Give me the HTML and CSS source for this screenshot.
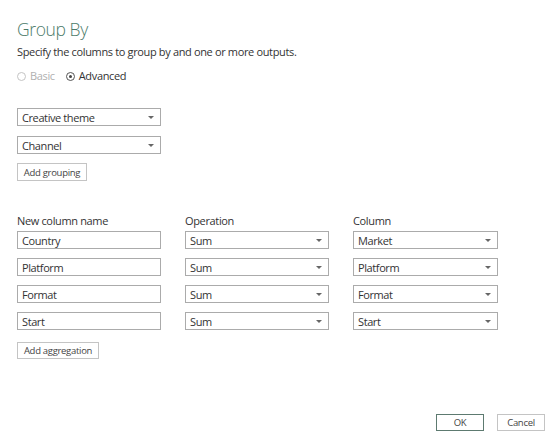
FILE: index.html
```html
<!DOCTYPE html>
<html>
<head>
<meta charset="utf-8">
<link rel="stylesheet" href="styles.css">
</head>
<body>
<div class="dialog">
  <h1 class="title">Group By</h1>
  <p class="subtitle">Specify the columns to group by and one or more outputs.</p>
  <div class="radios">
    <span class="radio disabled"><span class="dot"></span>Basic</span>
    <span class="radio checked"><span class="dot"></span>Advanced</span>
  </div>

  <div class="grouping">
    <div class="select"><span>Creative theme</span><span class="arrow"></span></div>
    <div class="select"><span>Channel</span><span class="arrow"></span></div>
    <button class="btn">Add grouping</button>
  </div>

  <div class="agg">
    <div class="label">New column name</div>
    <div class="label">Operation</div>
    <div class="label">Column</div>

    <div class="input">Country</div>
    <div class="select"><span>Sum</span><span class="arrow"></span></div>
    <div class="select"><span>Market</span><span class="arrow"></span></div>

    <div class="input">Platform</div>
    <div class="select"><span>Sum</span><span class="arrow"></span></div>
    <div class="select"><span>Platform</span><span class="arrow"></span></div>

    <div class="input">Format</div>
    <div class="select"><span>Sum</span><span class="arrow"></span></div>
    <div class="select"><span>Format</span><span class="arrow"></span></div>

    <div class="input">Start</div>
    <div class="select"><span>Sum</span><span class="arrow"></span></div>
    <div class="select"><span>Start</span><span class="arrow"></span></div>
  </div>
  <button class="btn agg-btn">Add aggregation</button>

  <div class="footer">
    <button class="btn ok">OK</button>
    <button class="btn">Cancel</button>
  </div>
</div>
</body>
</html>
```
FILE: styles.css
```css
html, body {
  margin: 0;
  padding: 0;
  background: #ffffff;
}
body {
  font-family: "Open Sans", "Noto Sans", sans-serif;
  color: #444444;
  width: 554px;
  height: 439px;
  overflow: hidden;
}
.dialog {
  padding: 0 9px 0 17px;
  display: flex;
  flex-direction: column;
  height: 439px;
  box-sizing: border-box;
}
.title {
  margin: 18px 0 0;
  font-size: 17.5px;
  line-height: 22px;
  font-weight: 300;
  letter-spacing: -0.4px;
  color: #4c7b6a;
}
.subtitle {
  margin: 4px 0 0;
  font-size: 11px;
  line-height: 16px;
  letter-spacing: -0.35px;
  color: #333333;
}
.radios {
  margin-top: 8px;
  display: flex;
  gap: 11px;
  font-size: 11px;
  line-height: 16px;
  letter-spacing: -0.35px;
}
.radio {
  display: flex;
  align-items: center;
  gap: 4px;
  color: #333;
}
.radio.disabled { color: #b0b0b0; }
.dot {
  width: 7px;
  height: 7px;
  border: 1px solid #555;
  border-radius: 50%;
  position: relative;
}
.radio.disabled .dot { border-color: #c4c4c4; }
.radio.checked .dot::after {
  content: "";
  position: absolute;
  left: 2px;
  top: 2px;
  width: 3px;
  height: 3px;
  border-radius: 50%;
  background: #444;
}
.grouping {
  margin-top: 24px;
  display: flex;
  flex-direction: column;
  align-items: flex-start;
  gap: 10px;
}
.select, .input {
  box-sizing: border-box;
  width: 144px;
  height: 18px;
  border: 1px solid #ababab;
  display: flex;
  align-items: center;
  justify-content: space-between;
  padding: 0 6px 0 4px;
  font-size: 11px;
  letter-spacing: -0.4px;
  color: #333;
  background: #fff;
}
.arrow {
  width: 0;
  height: 0;
  border-left: 3px solid transparent;
  border-right: 3px solid transparent;
  border-top: 3px solid #666;
}
.btn {
  box-sizing: border-box;
  height: 18px;
  border: 1px solid #c4c4c4;
  background: #fff;
  font-family: inherit;
  font-size: 9.5px;
  letter-spacing: -0.3px;
  color: #444;
  padding: 0;
  margin: 0;
  white-space: nowrap;
  text-align: center;
}
.grouping .btn {
  margin-top: -1px;
  width: 70px;
}
.agg {
  margin-top: 33px;
  display: grid;
  grid-template-columns: 144px 144px 145px;
  column-gap: 24px;
  row-gap: 9px;
  align-items: center;
}
.agg .label {
  font-size: 11px;
  line-height: 14px;
  letter-spacing: -0.35px;
  color: #333;
  margin-bottom: -6px;
}
.agg .select, .agg .input { width: 100%; }
.agg-btn {
  align-self: flex-start;
  margin-top: 12px;
  height: 17px;
  width: 82px;
}
.footer {
  margin-top: auto;
  margin-bottom: 8px;
  display: flex;
  justify-content: flex-end;
  gap: 13px;
}
.footer .btn {
  width: 48px;
  height: 17px;
}
.footer .ok {
  border-color: #5d7a70;
}
```
